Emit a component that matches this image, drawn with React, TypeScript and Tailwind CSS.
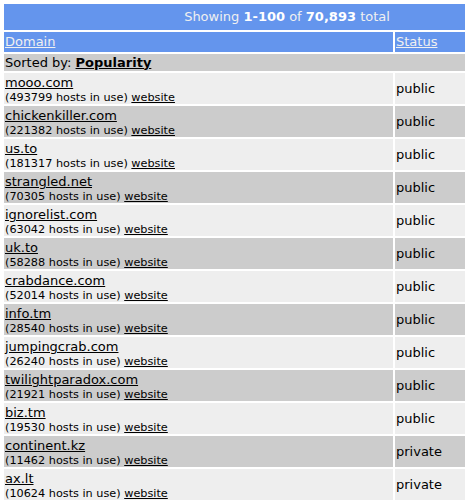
const domains = [
  { name: "mooo.com", hosts: 493799, status: "public" },
  { name: "chickenkiller.com", hosts: 221382, status: "public" },
  { name: "us.to", hosts: 181317, status: "public" },
  { name: "strangled.net", hosts: 70305, status: "public" },
  { name: "ignorelist.com", hosts: 63042, status: "public" },
  { name: "uk.to", hosts: 58288, status: "public" },
  { name: "crabdance.com", hosts: 52014, status: "public" },
  { name: "info.tm", hosts: 28540, status: "public" },
  { name: "jumpingcrab.com", hosts: 26240, status: "public" },
  { name: "twilightparadox.com", hosts: 21921, status: "public" },
  { name: "biz.tm", hosts: 19530, status: "public" },
  { name: "continent.kz", hosts: 11462, status: "private" },
  { name: "ax.lt", hosts: 10624, status: "private" },
];

const App = () => {
  return (
    <div
      className="w-[465px] h-[503px] overflow-hidden bg-white text-black"
      style={{ fontFamily: "Verdana, 'DejaVu Sans', sans-serif" }}
    >
      <table className="m-[2px] w-[570px] border-separate border-spacing-[2px] text-[13px]">
        <tbody>
          <tr>
            <td
              colSpan={2}
              className="bg-[#6495ed] h-[26px] p-0 text-center text-[#f0f0f0] leading-[16px]"
            >
              Showing <b className="text-white">1-100</b> of{" "}
              <b className="text-white">70,893</b> total
            </td>
          </tr>
          <tr>
            <td className="bg-[#6495ed] h-[20px] w-[389px] px-[1px] py-0 leading-[16px]">
              <a href="#" className="text-[#f0f0f0] underline">
                Domain
              </a>
            </td>
            <td className="bg-[#6495ed] h-[20px] px-[1px] py-0 leading-[16px]">
              <a href="#" className="text-[#f0f0f0] underline">
                Status
              </a>
            </td>
          </tr>
          <tr>
            <td colSpan={2} className="bg-[#cccccc] h-[17px] px-[1px] py-0 leading-[16px]">
              Sorted by: <b className="underline">Popularity</b>
            </td>
          </tr>
          {domains.map((d, i) => (
            <tr key={d.name} className={i % 2 === 0 ? "bg-[#eeeeee]" : "bg-[#cccccc]"}>
              <td className="h-[31px] px-[1px] pt-[2px] pb-0 align-top">
                <a href="#" className="block underline leading-[16px] w-fit">
                  {d.name}
                </a>
                <div className="text-[11.25px] leading-[13px]">
                  ({d.hosts} hosts in use){" "}
                  <a href="#" className="underline">
                    website
                  </a>
                </div>
              </td>
              <td className="h-[31px] px-[1px] py-0 align-middle">{d.status}</td>
            </tr>
          ))}
        </tbody>
      </table>
    </div>
  );
};

export default App;
